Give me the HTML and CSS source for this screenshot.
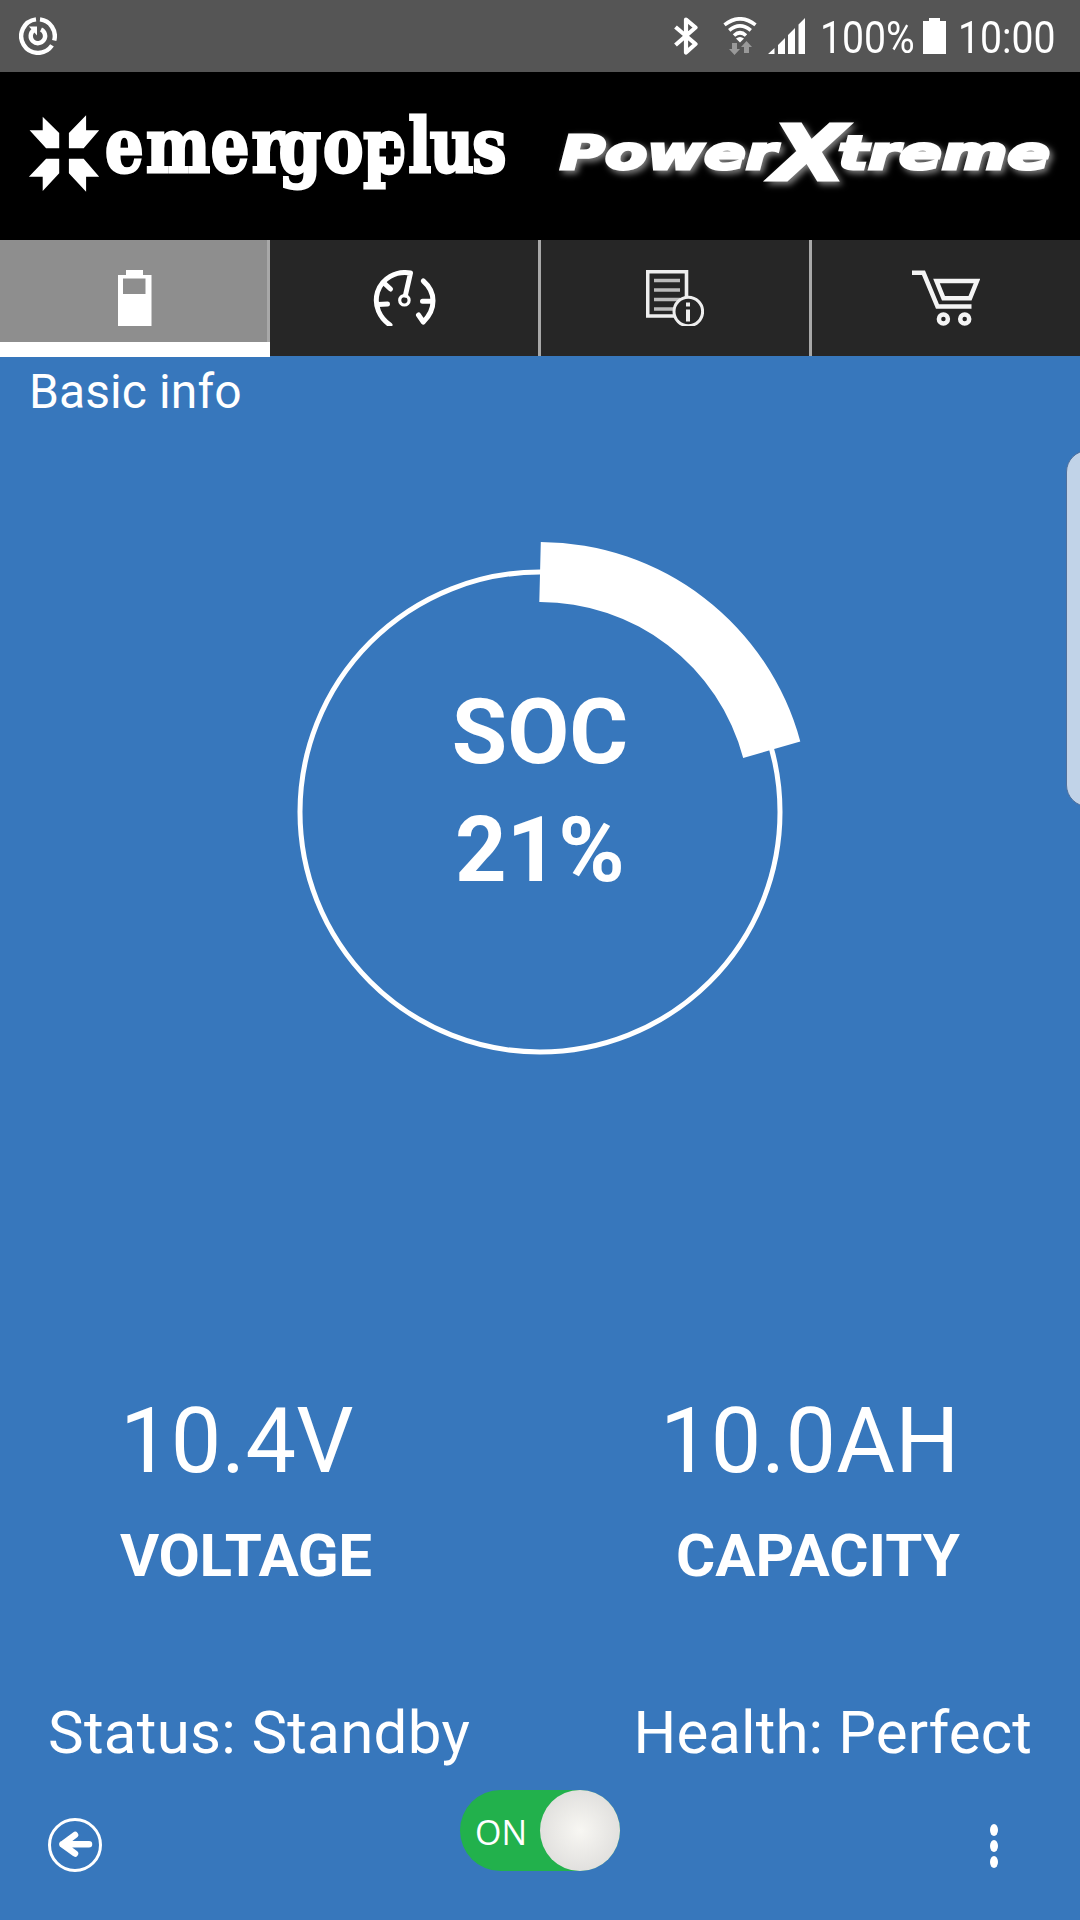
FILE: index.html
```html
<!DOCTYPE html>
<html lang="en">
  <head>
    <meta charset="UTF-8">
    <meta name="viewport" content="width=device-width, initial-scale=1.0">
    <title>PowerXtreme - Basic info</title>
    <link rel="stylesheet" href="styles.css">
  </head>
  <body>
    <div class="status-bar">
      <svg class="app-icon" width="38" height="38" viewBox="0 0 38 38" fill="none" stroke="#fff" stroke-width="4.400">
        <path d="M21 2.400A16.800 16.800 0 0 1 35.200 23.500M33 28.400A16.800 16.800 0 1 1 17 2.400"/>
        <path d="M22 12.500A7.200 7.200 0 1 1 14.500 13.300"/>
        <path d="M10 9.500H18V18.500Z" fill="#fff" stroke="none"/>
      </svg>
      <div class="status-right">
        <svg class="bluetooth" width="24" height="38" viewBox="0 0 24 38" fill="none" stroke="#fff" stroke-width="4.200" stroke-linejoin="round">
          <path d="M1.500 10L21.500 27L12 35.500V2.500L21.500 10.500L1.500 28"/>
        </svg>
        <svg class="wifi" width="34" height="38" viewBox="0 0 34 38" fill="none" stroke="#fff" stroke-width="3.600">
          <path d="M1.500 7.800Q17 -4.200 32.500 7.800M6.200 13.300Q17 4.300 27.800 13.300M11 18.500Q17 13 23 18.500"/>
          <path d="M13 21.500Q17 18.500 21 21.500L17 25.500Z" fill="#fff" stroke="none"/>
          <path d="M9 26h5v6h3l-5.500 6l-5.500-6h3zM21 36h5v-6h3l-5.500-6l-5.500 6h3z" fill="#999" stroke="none"/>
        </svg>
        <svg class="signal" width="37" height="36" viewBox="0 0 37 36" fill="#fff">
          <path d="M0 36L6.500 30V36ZM10 36V27L17 20V36ZM20 36V17L27 10V36ZM30.500 36V6.500L37 0V36Z"/>
        </svg>
        <span class="percent">100%</span>
        <svg class="battery" width="23" height="36" viewBox="0 0 23 36" fill="#fff">
          <path d="M6 0h11v3h6v33H0V3h6z"/>
        </svg>
        <span class="clock">10:00</span>
      </div>
    </div>

    <header>
      <svg width="1080" height="168" viewBox="0 72 1080 168" fill="#fff">
        <!-- emergoplus -->
        <path d="M29.600 130.300H42.700V116.700L59.200 133V148.300H46.100ZM86.100 115.300V130.300H99.200L83.700 148.300H68.900V133ZM59.200 158.700V173.300L42.700 191V176.700H28.900L46.100 158.700ZM68.900 158.700H83.700L99.200 176.700H86.100V191.700L68.900 173.300Z"/>
        <text class="emergoplus" transform="scale(0.82 1)" x="128 178 257 307 340 394 443 498 524 576" y="172.500">emergoplus</text>
        <ellipse cx="390" cy="152.500" rx="14" ry="16"/>
        <path d="M386 141h8v7.500h6.500v8H394v8h-8v-8h-6.500v-8h6.500z" fill="#000"/>
        <!-- PowerXtreme -->
        <g class="powerxtreme">
          <text x="560" y="169" textLength="216" lengthAdjust="spacingAndGlyphs">Power</text>
          <text x="838" y="169" textLength="212" lengthAdjust="spacingAndGlyphs">treme</text>
          <text class="big-x" x="772" y="180" textLength="74" lengthAdjust="spacingAndGlyphs">X</text>
        </g>
      </svg>
    </header>

    <nav class="tabs">
      <a class="tab active" href="#">
        <svg width="34" height="56" viewBox="0 0 34 56" fill="#fff">
          <path fill-rule="evenodd" d="M8 0h17v5h8.500v51H0V5h8zM5 8.500v15.500h22.500V8.500z"/>
        </svg>
      </a>
      <a class="tab" href="#">
        <svg width="64" height="56" viewBox="0 0 64 56" fill="none" stroke="#fff" stroke-width="5" stroke-linecap="round" stroke-linejoin="round">
          <path d="M33.500 25L38.500 3C24 .5 10 8 5.500 22C1.500 36 8 48 18 55"/>
          <path d="M12 13l6.500 6M6 34.500l9.500 -.5"/>
          <path d="M51.300 11C64 22 64.500 39 51.300 52L46.500 45M50.500 31.300H60"/>
          <circle cx="32.400" cy="30.300" r="4.700" stroke-width="3.200"/>
        </svg>
      </a>
      <a class="tab" href="#">
        <svg width="58" height="56" viewBox="0 0 58 56" fill="none" stroke="#eee" stroke-width="3.600">
          <path d="M1.700 1.700H40.500V46H1.700Z"/>
          <path d="M8 10.500H34M8 20H34M8 29.500H34M8 39H34" stroke="#bbb"/>
          <circle cx="42.300" cy="41.500" r="14.300" fill="#262626" stroke-width="3"/>
          <path d="M42 32.500v4M42 39.500v12" stroke-width="4"/>
        </svg>
      </a>
      <a class="tab" href="#">
        <svg width="68" height="56" viewBox="0 0 68 56" fill="none" stroke="#f4f4f4" stroke-width="4.500">
          <path d="M0 2.800H11.500L25.500 36.500H59.500"/>
          <path d="M24.500 11H65L58 28.300H31.500Z"/>
          <circle cx="31.400" cy="49" r="4.500"/>
          <circle cx="52.700" cy="49" r="4.500"/>
        </svg>
      </a>
    </nav>

    <main>
      <h1>Basic info</h1>

      <section class="dial">
        <svg width="540" height="540" viewBox="0 0 540 540">
          <circle cx="270" cy="270" r="240" fill="none" stroke="#fff" stroke-width="5"/>
          <path d="M270.800 0A270 270 0 0 1 530.300 199.400L473.200 216A210 210 0 0 0 269.300 60Z" fill="#fff"/>
        </svg>
        <div class="dial-text">
          <div>SOC</div>
          <div>21%</div>
        </div>
      </section>

      <section class="readings">
        <div class="reading voltage">
          <div class="value">10.4V</div>
          <div class="label">VOLTAGE</div>
        </div>
        <div class="reading capacity">
          <div class="value">10.0AH</div>
          <div class="label">CAPACITY</div>
        </div>
      </section>

      <section class="state">
        <span class="status">Status: Standby</span>
        <span class="health">Health: Perfect</span>
      </section>
    </main>

    <footer>
      <a class="back" href="#">
        <svg width="54" height="54" viewBox="0 0 54 54" fill="none" stroke="#fff">
          <circle cx="27" cy="27" r="25.500" stroke-width="3"/>
          <path d="M41 26.300H14.500M27 17L14.500 26.300L27 35.500" stroke-width="6.500" stroke-linecap="round" stroke-linejoin="round"/>
        </svg>
      </a>
      <div class="toggle">
        <span>ON</span>
        <div class="knob"></div>
      </div>
      <a class="more" href="#">
        <i></i>
        <i></i>
        <i></i>
      </a>
    </footer>

    <!-- Edge panel handle -->
    <div class="edge-handle"></div>
  </body>
</html>
```
FILE: styles.css
```css
* {
  box-sizing: border-box;
}

body {
  position: relative;
  display: flex;
  flex-direction: column;
  width: 1080px;
  height: 1920px;
  margin: 0;
  overflow: hidden;
  background-color: #3777bc;
  color: white;
  font-family: Roboto, sans-serif;
}

svg {
  display: block;
  flex: none;
}

.status-bar {
  display: flex;
  justify-content: space-between;
  align-items: center;
  height: 72px;
  padding: 0 24px 0 19px;
  background-color: #555;
}

.status-right {
  display: flex;
  align-items: center;
  font-size: 45px;
  line-height: 72px;
}

.wifi {
  margin-left: 25px;
}

.signal {
  margin-left: 11px;
}

/* narrow digits of the system font */
.percent,
.clock {
  display: block;
  padding-top: 3px;
  transform: scaleX(0.87);
  transform-origin: left;
}

.percent {
  width: 90px;
  margin-left: 15px;
  margin-right: 13px;
}

.clock {
  width: 98px;
  margin-left: 12px;
}

header {
  height: 168px;
  background-color: black;
}

.emergoplus {
  font: bold 74px "DejaVu Serif", serif;
  stroke: white;
  stroke-width: 3px;
}

.powerxtreme {
  font: italic bold 47px "DejaVu Sans", sans-serif;
  stroke: white;
  stroke-width: 3px;
  filter: drop-shadow(3px 3px 3px rgba(255, 255, 255, 0.5));
}

.big-x {
  font-size: 77px;
}

.tabs {
  display: grid;
  grid-template-columns: 270px 271px 271px 268px;
  height: 116px;
}

.tab {
  display: flex;
  justify-content: center;
  height: 116px;
  padding-top: 30px;
  border-right: 3px solid #a8a8a8;
  background-color: #262626;
}

.tab:last-child {
  border-right: none;
}

.tab.active {
  position: relative;
  padding-left: 2px;
  background-color: #8e8e8e;
}

/* indicator runs over the separator */
.tab.active::after {
  content: "";
  position: absolute;
  left: 0;
  right: -3px;
  bottom: -1px;
  height: 15px;
  background-color: white;
}

main {
  display: flex;
  flex-direction: column;
  height: 1434px;
  padding-top: 6px;
}

h1 {
  margin: 0 0 120px 29px;
  font-size: 48px;
  font-weight: normal;
  line-height: 60px;
  letter-spacing: 0.1px;
}

.dial {
  display: grid;
  justify-content: center;
}

.dial > * {
  grid-area: 1 / 1;
}

.dial-text {
  align-self: center;
  padding-bottom: 40px;
  font-size: 90px;
  font-weight: bold;
  line-height: 118px;
  text-align: center;
}

.readings {
  display: grid;
  grid-template-columns: 1fr 1fr;
  margin-top: 310px;
}

.value {
  padding-left: 120px;
  font-size: 90px;
  line-height: 100px;
  letter-spacing: 0.2px;
}

.label {
  margin-top: 34px;
  padding-left: 120px;
  font-size: 60px;
  font-weight: bold;
  line-height: 60px;
}

.voltage .label {
  letter-spacing: -0.4px;
}

.capacity .label {
  padding-left: 136px;
}

.state {
  display: flex;
  justify-content: space-between;
  margin-top: 117px;
  padding: 0 48px;
  font-size: 60px;
  line-height: 60px;
}

.status {
  letter-spacing: 0.3px;
}

.health {
  letter-spacing: 0.1px;
}

footer {
  display: flex;
  justify-content: space-between;
  align-items: flex-end;
  padding: 0 82px 0 48px;
}

.back {
  margin-bottom: -1px;
}

.toggle {
  display: flex;
  justify-content: space-between;
  align-items: center;
  width: 160px;
  height: 81px;
  margin-left: -12px;
  padding-left: 15px;
  border-radius: 41px;
  background-color: #22b14c;
  font-family: "Open Sans", sans-serif;
  font-size: 34px;
}

.toggle span {
  padding-top: 3px;
}

.knob {
  width: 80px;
  height: 81px;
  border-radius: 50%;
  background: radial-gradient(circle, #f8f7f3, #e0dfdd 75%);
}

.more {
  display: flex;
  flex-direction: column;
  gap: 4px;
  padding-bottom: 3px;
}

.more i {
  width: 8px;
  height: 12px;
  border-radius: 50%;
  background-color: white;
}

.edge-handle {
  position: absolute;
  top: 450px;
  right: -30px;
  width: 44px;
  height: 357px;
  border: 1px solid #50709c;
  border-radius: 22px;
  background-color: #c1d3e8;
}
```
